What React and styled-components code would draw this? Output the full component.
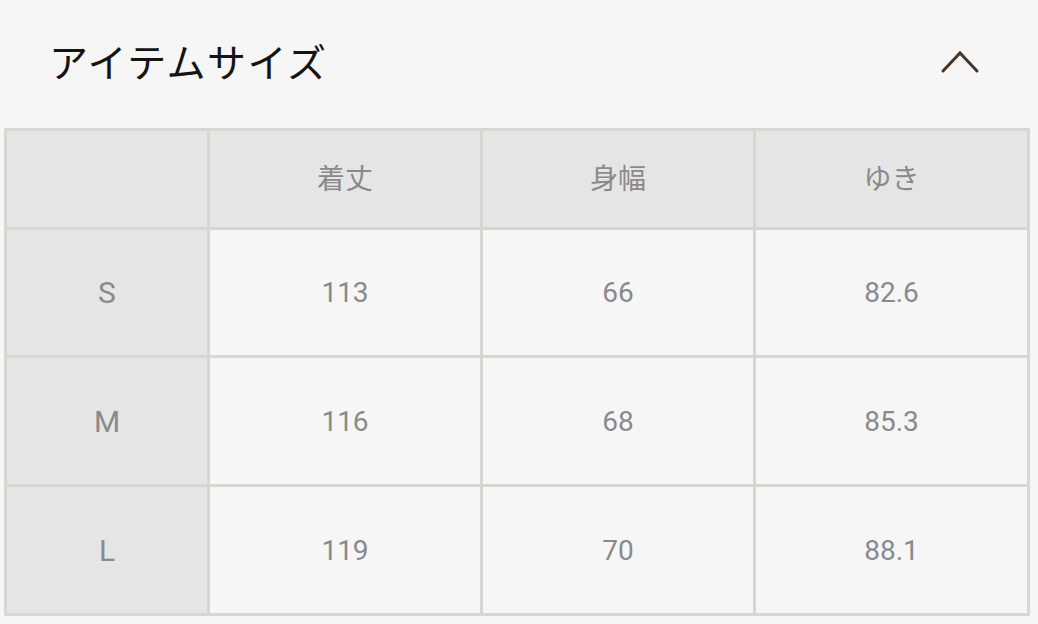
import React from "react";
import styled, { createGlobalStyle } from "styled-components";

const Global = createGlobalStyle`
  html, body { margin: 0; padding: 0; background: #f6f6f6; }
  body { font-family: Roboto, "Noto Sans CJK JP", sans-serif; }
`;

const Page = styled.div`
  width: 1038px;
  height: 624px;
  background: #f6f6f6;
  overflow: hidden;
`;

const Header = styled.div`
  height: 120px;
  display: flex;
  align-items: center;
  justify-content: space-between;
  padding: 0 58px 0 49px;
`;

const Title = styled.h2`
  margin: 0;
  font-family: "Noto Sans CJK JP", sans-serif;
  font-weight: 400;
  font-size: 39px;
  letter-spacing: 1.5px;
  color: #141414;
`;

const Chevron = styled.svg`
  width: 40px;
  height: 24px;
  display: block;
  margin-top: 4px;
`;

const Table = styled.div`
  margin: 8px 0 0 4px;
  width: 1026px;
  box-sizing: border-box;
  display: grid;
  grid-template-columns: 200px 270px 270px 271px;
  grid-template-rows: 96px 125px 126px 126px;
  gap: 3px;
  padding: 3px;
  background: #d8d6cf;
`;

const Cell = styled.div`
  display: flex;
  align-items: center;
  justify-content: center;
  padding-bottom: ${(p) => (p.$top ? "4px" : "0")};
  background: ${(p) => (p.$head ? "#e5e5e5" : "#f6f6f6")};
  color: #8a8a8a;
  font-size: ${(p) => (p.$label ? "30px" : "28px")};
  font-family: Roboto, "Noto Sans CJK JP", sans-serif;
`;

const columns = ["着丈", "身幅", "ゆき"];
const rows = [
  ["S", "113", "66", "82.6"],
  ["M", "116", "68", "85.3"],
  ["L", "119", "70", "88.1"],
];

export default function App() {
  return (
    <Page>
      <Global />
      <Header>
        <Title>アイテムサイズ</Title>
        <Chevron viewBox="0 0 40 24">
          <polyline
            points="3,21 20,3 37,21"
            fill="none"
            stroke="#4a3424"
            strokeWidth="3"
            strokeLinecap="round"
            strokeLinejoin="miter"
          />
        </Chevron>
      </Header>
      <Table>
        <Cell $head $top />
        {columns.map((c) => (
          <Cell $head $top key={c}>{c}</Cell>
        ))}
        {rows.map((r) =>
          r.map((v, i) => (
            <Cell $head={i === 0} $label={i === 0} key={r[0] + i}>
              {v}
            </Cell>
          ))
        )}
      </Table>
    </Page>
  );
}
